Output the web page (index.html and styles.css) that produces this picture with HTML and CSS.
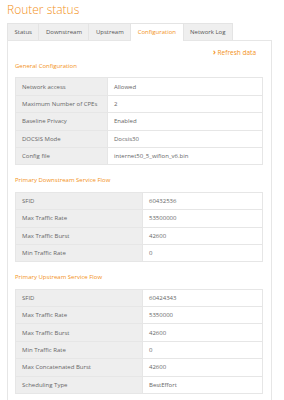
FILE: index.html
```html
<!DOCTYPE html>
<html lang="en">

<head>
	<meta charset="utf-8">
	<title>Router status</title>
	<link rel="stylesheet" href="styles.css">
</head>

<body>
	<h1 class="page-title">Router status</h1>

	<ul class="tabs">
		<li class="tab">Status</li>
		<li class="tab">Downstream</li>
		<li class="tab">Upstream</li>
		<li class="tab active">Configuration</li>
		<li class="tab">Network Log</li>
	</ul>

	<div class="panel">
		<div class="refresh">
			<a href="#"><span class="chevron">&rsaquo;</span> Refresh data</a>
		</div>

		<!-- general -->
		<h2 class="section-title first">General Configuration</h2>
		<table class="info-table general">
			<tr><td>Network access</td><td>Allowed</td></tr>
			<tr><td>Maximum Number of CPEs</td><td>2</td></tr>
			<tr><td>Baseline Privacy</td><td>Enabled</td></tr>
			<tr><td>DOCSIS Mode</td><td>Docsis30</td></tr>
			<tr><td>Config file</td><td>internet50_5_wifion_v6.bin</td></tr>
		</table>

		<!-- downstream flow -->
		<h2 class="section-title">Primary Downstream Service Flow</h2>
		<table class="info-table flow">
			<tr><td>SFID</td><td>60432536</td></tr>
			<tr><td>Max Traffic Rate</td><td>53500000</td></tr>
			<tr><td>Max Traffic Burst</td><td>42600</td></tr>
			<tr><td>Min Traffic Rate</td><td>0</td></tr>
		</table>

		<!-- upstream flow -->
		<h2 class="section-title">Primary Upstream Service Flow</h2>
		<table class="info-table flow">
			<tr><td>SFID</td><td>60424343</td></tr>
			<tr><td>Max Traffic Rate</td><td>5350000</td></tr>
			<tr><td>Max Traffic Burst</td><td>42600</td></tr>
			<tr><td>Min Traffic Rate</td><td>0</td></tr>
			<tr><td>Max Concatenated Burst</td><td>42600</td></tr>
			<tr><td>Scheduling Type</td><td>BestEffort</td></tr>
		</table>
	</div>
</body>

</html>
```

FILE: styles.css
```css
/* common css */
* {
	margin: 0;
	padding: 0;
	box-sizing: border-box;
}

body {
	font-family: 'Open Sans', 'Liberation Sans', sans-serif;
	font-size: 6px;
	color: #666;
	background-color: #fff;
	padding: 0 12px 0 7px;
}

/* title */
.page-title {
	font-size: 12px;
	font-weight: 300;
	color: #f39221;
	line-height: 18px;
	padding-top: 1px;
	height: 22.7px;
}

/* tabs */
.tabs {
	display: flex;
	list-style: none;
	height: 17.5px;
}

.tab {
	display: flex;
	align-items: center;
	padding: 0 6.5px;
	background-color: #efefef;
	border: 1px solid #e4e4e4;
	border-bottom: none;
	border-left: none;
	color: #555;
}

.tab:first-child {
	border-left: 1px solid #e4e4e4;
}

.tab.active {
	background-color: #fff;
	color: #f39221;
	position: relative;
	z-index: 1;
	height: 18.5px;
}

/* panel */
.panel {
	border: 1px solid #e6e6e6;
	padding: 6px 8px 20px 7px;
}

.refresh {
	text-align: right;
	line-height: 10px;
	padding-right: 7px;
	margin-bottom: 3px;
}

.refresh a {
	color: #f39221;
	text-decoration: none;
	font-size: 6.5px;
}

.chevron {
	font-weight: bold;
	font-size: 8px;
}

.section-title {
	font-size: 6px;
	font-weight: normal;
	color: #f39221;
	line-height: 10px;
	margin: 10px 0 6.3px;
}

.section-title.first {
	margin-top: 0;
}

/* tables */
.info-table {
	width: 100%;
	border-collapse: collapse;
}

.info-table td {
	height: 17.4px;
	padding: 0 6px;
	border: 1px solid #e6e6e6;
	background-color: #fff;
}

.info-table td:first-child {
	background-color: #eeeeee;
}

.general td:first-child {
	width: 92px;
}

.flow td:first-child {
	width: 127px;
}
```
